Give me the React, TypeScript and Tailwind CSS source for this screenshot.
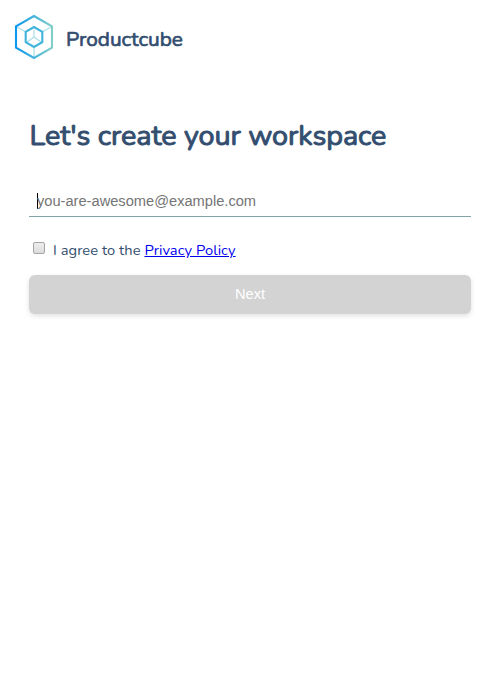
import React from "react";

function Logo() {
  return (
    <svg width="40" height="46" viewBox="0 0 40 46" fill="none" className="shrink-0">
      <defs>
        <linearGradient id="cube" x1="1" y1="0" x2="39" y2="0" gradientUnits="userSpaceOnUse">
          <stop offset="0" stopColor="#0896f0" />
          <stop offset="1" stopColor="#83d0c6" />
        </linearGradient>
      </defs>
      <path d="M2 12.5 12 18M38 12.5 28 18M20 33V43M20 23V16M20 23 13 28M20 23 27 28" stroke="#a9deea" strokeWidth="1.2" />
      <path d="M20 2 38 12.3V33.7L20 44 2 33.7V12.3Z" stroke="url(#cube)" strokeWidth="2.1" />
      <path d="M20 13 28.3 17.9V28.1L20 33 11.7 28.1V17.9Z" stroke="#41b4dc" strokeWidth="2.1" />
    </svg>
  );
}

export default function App() {
  return (
    <div className="flex min-h-[700px] w-full flex-col bg-white font-[Nunito,sans-serif] text-[#334e6f]">
      <header className="flex h-[60px] items-start pt-[14px] pl-[14px]">
        <Logo />
        <span className="ml-3 pt-[10px] text-[20.8px] leading-[30px] whitespace-nowrap [-webkit-text-stroke:0.7px_#334e6f]">
          Productcube
        </span>
      </header>
      <main className="flex flex-col px-[29px] pt-14">
        <h1 className="h-10 pl-[0.5px] text-[28.8px] leading-10 tracking-[-0.06px] whitespace-nowrap [-webkit-text-stroke:1px_#334e6f]">
          Let's create your workspace
        </h1>
        <div className="mt-[29px] flex h-8 items-center border-b border-[#80a5a9] pl-2 font-['Liberation_Sans',Arial,sans-serif] text-[14.667px] text-[#757575]">
          <span className="h-4 w-px bg-black" />
          <span className="-ml-px pt-px leading-[18px] tracking-[-0.01px] whitespace-nowrap">you-are-awesome@example.com</span>
        </div>
        <div className="mt-[23px] flex h-[20px] items-start pl-1">
          <span className="mt-[2px] h-3 w-3 rounded-[2px] border border-[#a5a5a5] bg-linear-to-b from-[#eeeeee] to-[#dcdcdc]" />
          <span className="ml-2 text-[14.667px] leading-5 tracking-[0.06px] whitespace-nowrap">
            I agree to the{" "}
            <a href="#" className="text-[#0000ee] underline">Privacy Policy</a>
          </span>
        </div>
        <button className="mt-[15px] h-[39px] rounded-[6px] bg-[#d3d3d3] pb-[2px] font-['Liberation_Sans',Arial,sans-serif] text-[14.667px] text-white shadow-[0_2px_5px_rgba(0,0,0,0.12)]">
          Next
        </button>
      </main>
    </div>
  );
}
